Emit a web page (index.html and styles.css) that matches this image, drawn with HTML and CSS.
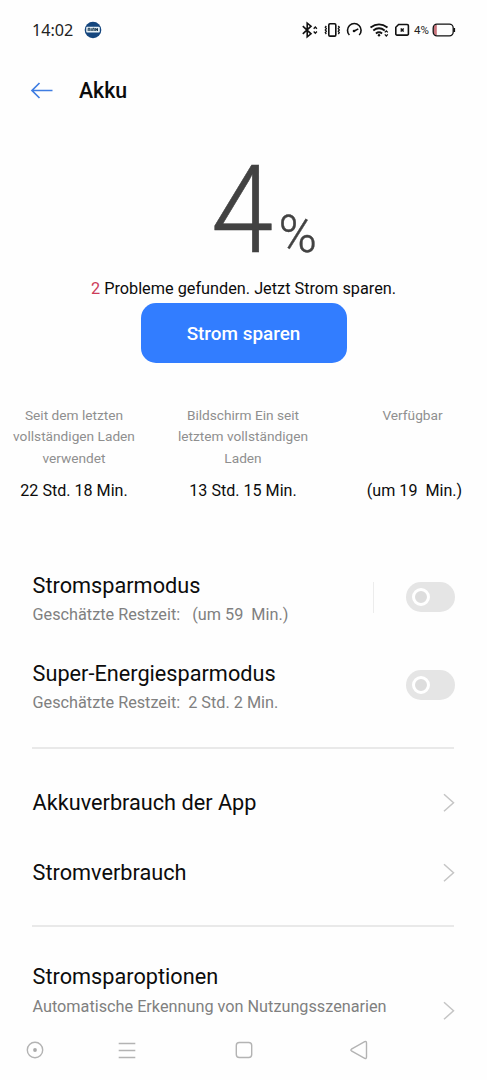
FILE: index.html
```html
<!DOCTYPE html>
<html lang="de">
<head>
<meta charset="utf-8">
<title>Akku</title>
<link rel="stylesheet" href="styles.css">
</head>
<body>
<div class="screen">
  <div class="status">
    <span class="clock">14:02</span>
    <svg class="app-badge" width="18" height="18" viewBox="0 0 18 18"><circle cx="9" cy="9" r="8.3" fill="#15467e"/><rect x="2.2" y="5.8" width="13.6" height="5.6" rx="1" fill="#e8f1f6"/><path d="M4.2 10V7.3h1.6V10M7.2 7.2V10M8.8 10V7.3h1.4V10M11.7 10V7.2l1.8 2.8V7.2" fill="none" stroke="#15364f" stroke-width="1"/></svg>
    <svg class="status-icons" width="116" height="20" viewBox="0 0 116 20" fill="none" stroke="#111" stroke-width="1.6">
      <path d="M1.800 6.200l8.200 7.600-3.800 3V3.200l3.800 3L1.800 13.800"/>
      <path d="M12.700 8.700l1.600-1.700 1.600 1.700M12.700 11.500l1.600 1.700 1.600-1.700" stroke-width="1.300"/>
      <rect x="27.800" y="3.800" width="7" height="12.300" rx="1.200"/>
      <path d="M25.300 6l-1 1.300 1 1.300-1 1.400 1 1.300-1 1.300 1 1.400M37.300 6l1 1.300-1 1.300 1 1.400-1 1.300 1 1.300-1 1.400" stroke-width="1.300"/>
      <path d="M48.400 15A6.800 6.800 0 1 1 58.200 15M53.300 11l4-2.100"/><circle cx="53" cy="11" r="1.300" fill="#111" stroke="none"/>
      <path d="M69.500 7.400Q78 1.300 86.500 7.400M72.300 10.400Q78 6.200 83.700 10.400M74.900 13.400Q78 11 81.100 13.400" stroke-width="1.900"/><circle cx="78" cy="15.300" r="1.200" fill="#111" stroke="none"/>
      <path d="M83.800 12.400l1.500-1.600 1.500 1.600M83.800 14.400l1.500 1.600 1.500-1.600" stroke-width="1.200"/>
      <path d="M97.600 4.500h8.600a1.200 1.200 0 0 1 1.200 1.200v8.200a1.200 1.200 0 0 1-1.200 1.200H96a1.200 1.200 0 0 1-1.200-1.200V7.300z"/><path d="M99.700 8.500l3 3M102.700 8.500l-3 3" stroke-width="1.500"/>
    </svg>
    <span class="charge">4%</span>
    <svg class="battery" width="24" height="14" viewBox="0 0 24 14"><path d="M4.800 1.800v10.400Q1.500 12 1.500 8.500v-3Q1.500 2 4.800 1.800z" fill="#c9737b"/><rect x="1.200" y="1.200" width="20" height="11.600" rx="3.800" fill="none" stroke="#111" stroke-width="1.300"/><path d="M22.300 5v4" stroke="#111" stroke-width="1.600"/></svg>
  </div>
  <div class="header">
    <svg class="back" width="24" height="20" viewBox="0 0 24 20" fill="none" stroke="#3f7de2" stroke-width="1.700"><path d="M22.500 10.500H2M9.500 3L2 10.500l7.500 7.500"/></svg>
    <h1 class="title">Akku</h1>
  </div>
  <div class="level"><span class="level-value">4</span><span class="level-unit">%</span></div>
  <p class="notice"><span class="count">2</span> Probleme gefunden. Jetzt Strom sparen.</p>
  <button class="save">Strom sparen</button>
  <div class="stats">
    <div class="stat"><p class="stat-label">Seit dem letzten<br>vollständigen Laden<br>verwendet</p><p class="stat-value">22 Std. 18 Min.</p></div>
    <div class="stat"><p class="stat-label">Bildschirm Ein seit<br>letztem vollständigen<br>Laden</p><p class="stat-value">13 Std. 15 Min.</p></div>
    <div class="stat"><p class="stat-label">Verfügbar</p><p class="stat-value">&nbsp;(um 19&nbsp; Min.)</p></div>
  </div>
  <div class="modes">
    <div class="mode"><div class="text"><p class="name">Stromsparmodus</p><p class="detail">Geschätzte Restzeit: &nbsp; (um 59&nbsp; Min.)</p></div><span class="separator"></span><span class="switch"><span class="knob"></span></span></div>
    <div class="mode"><div class="text"><p class="name">Super-Energiesparmodus</p><p class="detail">Geschätzte Restzeit:&nbsp; 2 Std. 2 Min.</p></div><span class="switch"><span class="knob"></span></span></div>
  </div>
  <div class="links">
    <div class="link"><p class="name">Akkuverbrauch der App</p><svg class="chevron" width="12" height="20" viewBox="0 0 12 20"><path d="M1 1.300L10.500 9.800 1 18.300"/></svg></div>
    <div class="link"><p class="name">Stromverbrauch</p><svg class="chevron" width="12" height="20" viewBox="0 0 12 20"><path d="M1 1.300L10.500 9.800 1 18.300"/></svg></div>
  </div>
  <div class="options">
    <div class="text"><p class="name">Stromsparoptionen</p><p class="detail">Automatische Erkennung von Nutzungsszenarien</p></div>
    <svg class="chevron" width="12" height="20" viewBox="0 0 12 20"><path d="M1 1.300L10.500 9.800 1 18.300"/></svg>
  </div>
  <div class="nav">
    <svg width="20" height="20" viewBox="0 0 20 20"><circle cx="10" cy="10" r="7.700"/><circle cx="10" cy="10" r="1.900" fill="#aaa" stroke="none"/></svg>
    <svg width="20" height="20" viewBox="0 0 20 20"><path d="M1.700 3.500h16.600M1.700 10.500h16.600M1.700 17.500h16.600"/></svg>
    <svg width="20" height="20" viewBox="0 0 20 20"><rect x="2.300" y="2.500" width="15.400" height="15" rx="3"/></svg>
    <svg width="20" height="20" viewBox="0 0 20 20"><path d="M2.400 9.200L15.700 1.700Q17.500 1 17.500 2.900V17.100Q17.500 19 15.700 18.300L2.400 10.800Q1.300 10 2.400 9.200z"/></svg>
  </div>
</div>
</body>
</html>
```
FILE: styles.css
```css
* { box-sizing: border-box; }
body { margin: 0; background: #fefefe; color: #0c0c0c; font-family: Roboto, "Liberation Sans", sans-serif; }
p, h1 { margin: 0; white-space: nowrap; }
svg { flex: none; display: block; }
.screen { width: 487px; height: 1080px; overflow: hidden; display: flex; flex-direction: column; }
.status { height: 60px; padding: 0 31px 0 32px; display: flex; align-items: center; flex: none; }
.clock { font: 16.200px/20px "Noto Sans", sans-serif; width: 52px; color: #222; }
.status-icons { margin-left: auto; }
.charge { font-size: 11.500px; line-height: 20px; width: 16px; margin: 0 2px 0 -3px; color: #222; white-space: nowrap; }
.header { height: 60px; padding-left: 30px; display: flex; align-items: center; gap: 25px; flex: none; }
.title { font-size: 21.300px; line-height: 28px; font-weight: 500; padding-top: 1px; }
.level { height: 155px; padding: 31px 0 0 210.500px; display: flex; align-items: baseline; color: #424242; flex: none; font-weight: 300; }
.level-value { font-size: 122px; line-height: 120px; width: 68px; transform: scaleX(.92); transform-origin: left; -webkit-text-stroke: .500px #424242; }
.level-unit { font-size: 52px; line-height: 60px; -webkit-text-stroke: .400px #424242; }
.notice { text-align: center; font-size: 16.270px; line-height: 27px; height: 28px; flex: none; }
.count { color: #cc3d59; }
.save { width: 206px; height: 60px; border: 0; border-radius: 15px; background: #327dff; color: #fff; font: 500 18.900px/60px Roboto, sans-serif; padding: 1px 0 0; align-self: center; flex: none; }
.stats { margin-top: 42px; height: 145px; display: grid; grid-template-columns: 148px 190px 149px; flex: none; }
.stat { text-align: center; }
.stat-label { height: 74px; font-size: 13.700px; line-height: 21.300px; color: #8f8f8f; }
.stat-value { font-size: 16.100px; line-height: 24px; }
.modes { margin: 0 33px 0 32px; padding-top: 1px; height: 199px; border-bottom: 2px solid #e9e9e9; flex: none; }
.mode { height: 88px; padding-top: 20px; margin-right: -1px; display: flex; align-items: flex-start; }
.text { flex: 1; }
.name { font-size: 21.700px; line-height: 30px; padding-left: .600px; }
.detail { font-size: 16.240px; line-height: 24px; margin-top: 2px; padding-left: .500px; color: #808080; }
.separator { width: 1px; height: 31px; background: #ececec; margin: 11px 32px 0 0; }
.switch { width: 49px; height: 30px; border-radius: 15px; background: #e5e5e5; padding: 6px; margin-top: 11px; }
.knob { display: block; width: 18px; height: 18px; border: 3.500px solid #fff; border-radius: 9px; background: #ddd; }
.links { margin: 0 33px 0 32px; padding-top: 19px; height: 178px; border-bottom: 2px solid #e9e9e9; flex: none; }
.link { height: 70px; display: flex; justify-content: space-between; align-items: center; }
.chevron { fill: none; stroke: #c5c5c5; stroke-width: 1.500; margin-right: -1px; }
.link .chevron { margin-bottom: 1px; }
.options { margin: 0 33px 0 32px; padding-top: 35px; height: 103px; display: flex; flex: none; }
.options .detail { margin-top: 3px; }
.options .chevron { margin-top: 39px; }
.nav { padding: 10px 0 0 24.500px; display: grid; grid-template-columns: 92.500px 116.500px 115.500px 20px; }
.nav svg { fill: none; stroke: #b3b3b3; stroke-width: 1.400; }
```
